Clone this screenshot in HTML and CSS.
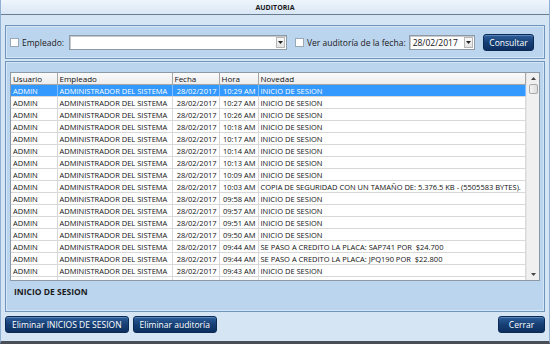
FILE: index.html
```html
<!DOCTYPE html>
<html lang="es">
<head>
    <meta charset="UTF-8">
    <title>Auditoria</title>
    <link rel="stylesheet" href="styles.css">
</head>
<body>
    <div class="window">
        <div class="title">AUDITORIA</div>
        <div class="content">
            <div class="panel filtros">
                <label class="check"><span class="box"></span>Empleado:</label>
                <div class="combo empleado"><span class="arrow"><svg width="5" height="3" viewBox="0 0 5 3"><path d="M0 0h5L2.5 3z" fill="#222"/></svg></span></div>
                <label class="check fecha-check"><span class="box"></span>Ver auditoría de la fecha:</label>
                <div class="combo fecha">28/02/2017<span class="arrow"><svg width="5" height="3" viewBox="0 0 5 3"><path d="M0 0h5L2.5 3z" fill="#222"/></svg></span></div>
                <button class="btn consultar">Consultar</button>
            </div>

            <div class="panel lista">
                <div class="grid">
                    <div class="grid-body">
                        <table>
                            <colgroup>
                                <col class="c-usuario"><col class="c-empleado"><col class="c-fecha"><col class="c-hora"><col>
                            </colgroup>
                            <thead>
                                <tr><th>Usuario</th><th>Empleado</th><th>Fecha</th><th>Hora</th><th>Novedad</th></tr>
                            </thead>
                            <tbody>
                                <tr class="sel"><td>ADMIN</td><td>ADMINISTRADOR DEL SISTEMA</td><td class="r">28/02/2017</td><td class="r">10:29 AM</td><td>INICIO DE SESION</td></tr>
                                <tr><td>ADMIN</td><td>ADMINISTRADOR DEL SISTEMA</td><td class="r">28/02/2017</td><td class="r">10:27 AM</td><td>INICIO DE SESION</td></tr>
                                <tr><td>ADMIN</td><td>ADMINISTRADOR DEL SISTEMA</td><td class="r">28/02/2017</td><td class="r">10:26 AM</td><td>INICIO DE SESION</td></tr>
                                <tr><td>ADMIN</td><td>ADMINISTRADOR DEL SISTEMA</td><td class="r">28/02/2017</td><td class="r">10:18 AM</td><td>INICIO DE SESION</td></tr>
                                <tr><td>ADMIN</td><td>ADMINISTRADOR DEL SISTEMA</td><td class="r">28/02/2017</td><td class="r">10:17 AM</td><td>INICIO DE SESION</td></tr>
                                <tr><td>ADMIN</td><td>ADMINISTRADOR DEL SISTEMA</td><td class="r">28/02/2017</td><td class="r">10:14 AM</td><td>INICIO DE SESION</td></tr>
                                <tr><td>ADMIN</td><td>ADMINISTRADOR DEL SISTEMA</td><td class="r">28/02/2017</td><td class="r">10:13 AM</td><td>INICIO DE SESION</td></tr>
                                <tr><td>ADMIN</td><td>ADMINISTRADOR DEL SISTEMA</td><td class="r">28/02/2017</td><td class="r">10:09 AM</td><td>INICIO DE SESION</td></tr>
                                <tr><td>ADMIN</td><td>ADMINISTRADOR DEL SISTEMA</td><td class="r">28/02/2017</td><td class="r">10:03 AM</td><td>COPIA DE SEGURIDAD CON UN TAMAÑO DE: 5.376.5 KB - (5505583 BYTES).</td></tr>
                                <tr><td>ADMIN</td><td>ADMINISTRADOR DEL SISTEMA</td><td class="r">28/02/2017</td><td class="r">09:58 AM</td><td>INICIO DE SESION</td></tr>
                                <tr><td>ADMIN</td><td>ADMINISTRADOR DEL SISTEMA</td><td class="r">28/02/2017</td><td class="r">09:57 AM</td><td>INICIO DE SESION</td></tr>
                                <tr><td>ADMIN</td><td>ADMINISTRADOR DEL SISTEMA</td><td class="r">28/02/2017</td><td class="r">09:51 AM</td><td>INICIO DE SESION</td></tr>
                                <tr><td>ADMIN</td><td>ADMINISTRADOR DEL SISTEMA</td><td class="r">28/02/2017</td><td class="r">09:50 AM</td><td>INICIO DE SESION</td></tr>
                                <tr><td>ADMIN</td><td>ADMINISTRADOR DEL SISTEMA</td><td class="r">28/02/2017</td><td class="r">09:44 AM</td><td>SE PASO A CREDITO LA PLACA: SAP741 POR &nbsp;$24.700</td></tr>
                                <tr><td>ADMIN</td><td>ADMINISTRADOR DEL SISTEMA</td><td class="r">28/02/2017</td><td class="r">09:44 AM</td><td>SE PASO A CREDITO LA PLACA: JPQ190 POR &nbsp;$22.800</td></tr>
                                <tr><td>ADMIN</td><td>ADMINISTRADOR DEL SISTEMA</td><td class="r">28/02/2017</td><td class="r">09:43 AM</td><td>INICIO DE SESION</td></tr>
                                <tr class="blank"><td></td><td></td><td></td><td></td><td></td></tr>
                            </tbody>
                        </table>
                    </div>
                    <div class="scroll">
                        <span class="sb-btn"><svg width="5" height="3" viewBox="0 0 5 3"><path d="M0 3h5L2.5 0z" fill="#444"/></svg></span>
                        <span class="thumb"></span>
                        <span class="track"></span>
                        <span class="sb-btn"><svg width="5" height="3" viewBox="0 0 5 3"><path d="M0 0h5L2.5 3z" fill="#444"/></svg></span>
                    </div>
                </div>
                <div class="detalle">INICIO DE SESION</div>
            </div>

            <div class="acciones">
                <button class="btn">Eliminar INICIOS DE SESION</button>
                <button class="btn">Eliminar auditoría</button>
                <button class="btn cerrar">Cerrar</button>
            </div>
        </div>
    </div>
</body>
</html>
```

FILE: styles.css
```css
body {
    margin: 0;
    font-family: 'Open Sans', 'Noto Sans', sans-serif;
    font-size: 9px;
    color: #111;
}
.window {
    width: 550px;
    height: 344px;
    box-sizing: border-box;
    background: #d6e5f4;
    border-left: 1px solid #8fb0d2;
    border-right: 1px solid #8fb0d2;
    border-bottom: 3px solid #4a4f57;
    display: flex;
    flex-direction: column;
}
.title {
    height: 14px;
    line-height: 15px;
    text-align: center;
    font-weight: bold;
    font-size: 7px;
    color: #1a1a1a;
    background: linear-gradient(#eef5fc, #d9e7f5);
    border-bottom: 1px solid #6a7c92;
}
.content {
    padding: 10px 4px 0 4px;
    display: flex;
    flex-direction: column;
    gap: 2px;
}
.panel {
    background: #bcd5ee;
    border: 1px solid #6f95bd;
    box-shadow: inset 0 0 0 1px #d4e5f6;
    box-sizing: border-box;
}
.filtros {
    height: 34px;
    display: flex;
    align-items: center;
    padding: 0 10px 0 4px;
}
.check {
    display: flex;
    align-items: center;
    gap: 3px;
    font-size: 8.5px;
    color: #1a1a1a;
    white-space: nowrap;
}
.box {
    width: 7px;
    height: 7px;
    background: #fff;
    border: 1px solid #9aa8b6;
}
.combo {
    height: 13px;
    background: #fff;
    border: 1px solid #8d99a6;
    box-shadow: inset 1px 1px 0 #c9c9c9;
    position: relative;
    font-size: 8.5px;
    line-height: 14px;
    padding-left: 3px;
    white-space: nowrap;
}
.arrow {
    position: absolute;
    right: 1px;
    top: 1px;
    width: 9px;
    height: 11px;
    background: linear-gradient(#fafafa, #e2e2e2);
    border: 1px solid #b6b6b6;
    box-sizing: border-box;
    display: flex;
    align-items: center;
    justify-content: center;
}
.empleado {
    width: 213px;
    margin-left: 5px;
}
.fecha-check {
    margin-left: 8px;
}
.fecha {
    width: 61px;
    margin-left: 3px;
}
.btn {
    height: 17px;
    padding: 0 6px;
    border: 1px solid #0a2a55;
    border-radius: 3px;
    background: linear-gradient(#2d5e9a, #173f75 50%, #0c2f60);
    box-shadow: inset 0 1px 0 #5b86bd;
    color: #fff;
    font-family: 'Open Sans', 'Noto Sans', sans-serif;
    font-size: 8.5px;
    white-space: nowrap;
    cursor: pointer;
}
.consultar {
    margin-left: auto;
    width: 51px;
    padding: 0;
}
.lista {
    height: 251px;
    padding: 10px 4px 0 4px;
}
.grid {
    display: flex;
    height: 209px;
    box-sizing: border-box;
    background: #fff;
    border: 1px solid #8c9aa8;
}
.grid-body {
    flex: 1;
    overflow: hidden;
}
table {
    width: 100%;
    border-collapse: collapse;
    table-layout: fixed;
    font-size: 7.5px;
}
.c-usuario { width: 46px; }
.c-empleado { width: 115px; }
.c-fecha { width: 47px; }
.c-hora { width: 39px; }
th {
    height: 11px;
    padding: 0 2px;
    text-align: left;
    font-weight: normal;
    font-size: 8px;
    background: linear-gradient(#fbfbfb, #ececec);
    border-right: 1px solid #a6a6a6;
    border-bottom: 1px solid #a6a6a6;
}
td {
    height: 11px;
    padding: 0 2px;
    white-space: nowrap;
    overflow: hidden;
    border-right: 1px solid #d8d8d8;
    border-bottom: 1px solid #d8d8d8;
}
td.r {
    text-align: right;
}
tr.sel td {
    background: #3399ff;
    color: #fff;
    border-right-color: #7fbfff;
}
tr.blank td {
    border-bottom: none;
}
.scroll {
    width: 12px;
    border-left: 1px solid #e6e6e6;
    background: #f0f0f0;
    display: flex;
    flex-direction: column;
    align-items: center;
}
.sb-btn {
    width: 12px;
    height: 11px;
    display: flex;
    align-items: center;
    justify-content: center;
}
.thumb {
    width: 9px;
    height: 10px;
    border: 1px solid #a9a9a9;
    border-radius: 2px;
    background: linear-gradient(to right, #f4f4f4, #dcdcdc);
    box-sizing: border-box;
}
.track {
    flex: 1;
}
.detalle {
    padding: 5px 0 0 4px;
    font-weight: bold;
    font-size: 8.5px;
    color: #1a1a1a;
}
.acciones {
    display: flex;
    gap: 4px;
    margin-top: 2px;
}
.acciones .cerrar {
    margin-left: auto;
    width: 47px;
}
```
